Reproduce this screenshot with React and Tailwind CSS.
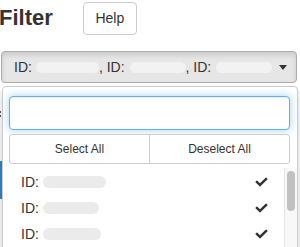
export default function App() {
  const Check = () => (
    <svg viewBox="0 0 512 512" className="w-[13px] h-[12px]" fill="#333">
      <path d="M173.898 439.404l-166.4-166.4c-9.997-9.997-9.997-26.206 0-36.204l36.203-36.204c9.997-9.998 26.207-9.998 36.204 0L192 312.69 432.095 72.596c9.997-9.997 26.207-9.997 36.204 0l36.203 36.204c9.997 9.997 9.997 26.206 0 36.204l-294.4 294.401c-9.998 9.997-26.207 9.997-36.204-.001z" />
    </svg>
  );
  const rows = [63, 56, 58];
  return (
    <div className="relative w-[300px] h-[247px] overflow-hidden bg-white text-[#333] font-['Liberation_Sans',Arial,sans-serif]">
      <div className="absolute left-0 top-[111px] w-[1px] h-[2px] bg-[#555]" />
      <div className="absolute left-0 top-[115px] w-[1px] h-[2px] bg-[#555]" />
      <div className="absolute left-0 top-[161px] w-[2px] h-[38px] bg-[#337ab7] z-10" />

      <div className="flex items-center pt-[2px] h-[35px]">
        <h2 className="ml-[-1px] mb-[2px] text-[22px] leading-[22px] font-bold text-[#333]">Filter</h2>
        <button className="ml-[30px] w-[54px] h-[33px] border border-[#ccc] rounded-[4px] bg-white text-[14px] text-[#333]">
          Help
        </button>
      </div>

      <div className="mt-[16px] ml-[1px] w-[296px] h-[32px] flex items-center pl-[12px] pr-[9px] border border-[#adadad] rounded-[4px] bg-[#e6e6e6] shadow-[inset_0_3px_5px_rgba(0,0,0,0.125)] text-[14px]">
        <span>ID:</span>
        <span className="ml-[4px] w-[63px] h-[11px] rounded-full bg-[#f2f2f2]" />
        <span>, ID:</span>
        <span className="ml-[5px] w-[56px] h-[11px] rounded-full bg-[#f2f2f2]" />
        <span>, ID:</span>
        <span className="ml-[5px] w-[56px] h-[11px] rounded-full bg-[#f2f2f2]" />
        <svg viewBox="0 0 8 5" className="ml-auto w-[8px] h-[5px]" fill="#333">
          <path d="M0 0h8L4 5z" />
        </svg>
      </div>

      <div className="mt-[3px] ml-[2px] w-[296px] h-[200px] border border-[#ccc] rounded-[4px] bg-white shadow-[0_6px_12px_rgba(0,0,0,0.175)]">
        <div className="pl-[6px] pr-[7px] pt-[9px]">
          <div className="h-[34px] border border-[#66afe9] rounded-[4px] bg-white shadow-[inset_0_1px_1px_rgba(0,0,0,0.075),0_0_8px_rgba(102,175,233,0.6)]" />
          <div className="mt-[4px] flex h-[30px] text-[12px] text-[#333]">
            <button className="flex-1 border border-[#ccc] rounded-l-[3px] bg-white">Select All</button>
            <button className="flex-1 -ml-px border border-[#ccc] rounded-r-[3px] bg-white">Deselect All</button>
          </div>
        </div>
        <div className="mt-[4px] flex h-[100px]">
          <div className="flex-1 flex flex-col pt-[1px]">
            {rows.map((w, i) => (
              <div key={i} className="h-[26px] shrink-0 flex items-center pl-[18px] pr-[16px] text-[14px]">
                <span>ID:</span>
                <span className="ml-[4px] h-[12px] rounded-full bg-[#ebebeb]" style={{ width: w }} />
                <span className="ml-auto">
                  <Check />
                </span>
              </div>
            ))}
          </div>
          <div className="w-[13px] border-l border-[#e5e5e5] bg-[#f8f8f8] pt-[3px]">
            <div className="mx-auto w-[8px] h-[40px] rounded-full bg-[#c1c1c1]" />
          </div>
        </div>
      </div>
    </div>
  );
}
